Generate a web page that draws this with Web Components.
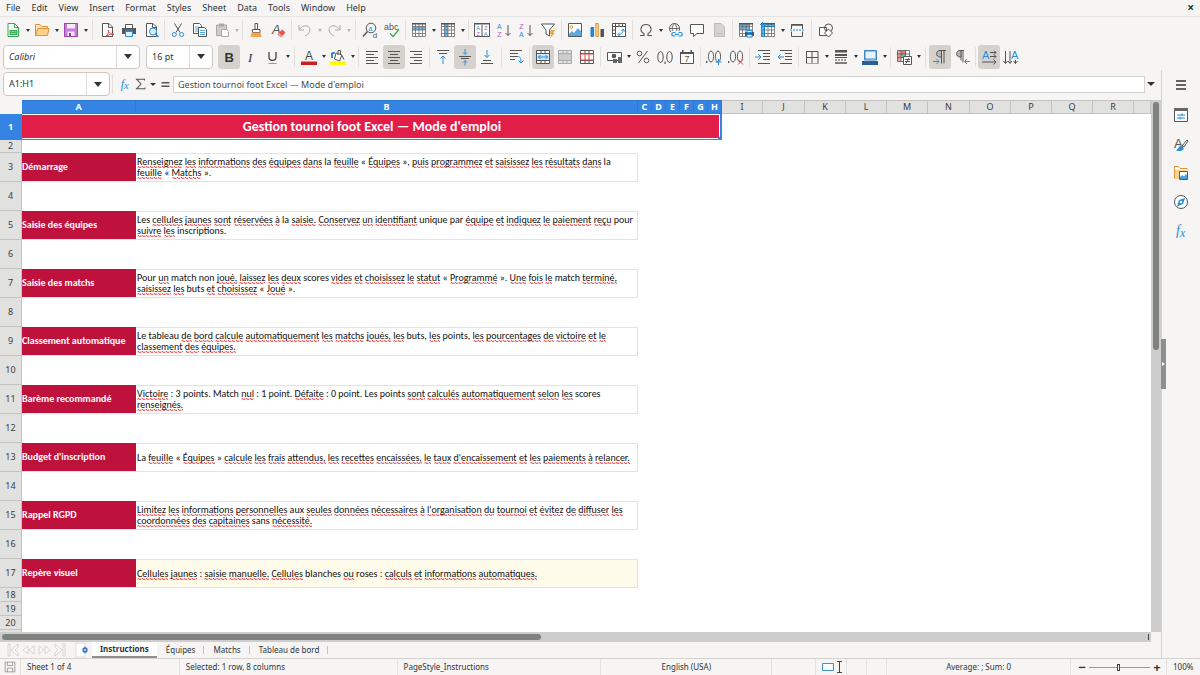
<!DOCTYPE html>
<html lang="fr">
<head>
<meta charset="utf-8">
<title>Gestion tournoi foot Excel</title>
<style>
html, body { margin: 0; height: 100%; }
body { font: 9px/12px "Noto Sans", "Open Sans", sans-serif; color: #2e3436; background: #f6f5f4; overflow: hidden;
  --line: #d5d2cf; --edge: #cdc7c2; --down: #d5d1cd; --blue: #3584e4; --sheet-font: Carlito, Lato, sans-serif; }
</style>
</head>
<body>
<calc-app></calc-app>
<script>
const K = '#555', B = '#2a8fd8', O = '#e8953a', P = '#b455c4', R = '#e04848';
const p = (d, s = K, f = 'none', w = 1) => `<path d="${d}" stroke="${s}" fill="${f}" stroke-width="${w}"/>`;
const f = (d, c = K) => `<path d="${d}" fill="${c}"/>`;
const t = (x, y, size, c, s, extra = '') => `<text x="${x}" y="${y}" font-size="${size}" fill="${c}" ${extra}>${s}</text>`;
const page = p('M3.5 1.5H10l3.5 3.5v9.5h-10z', K, '#fff') + p('M9.5 1.5V5.5H13.5');
/* A 4 x 4 table; `tint` colours one band of its cells */
const grid = (tint = '') => f('M1 1h14v14H1z', '#fff') + tint + p('M1.500 1.500h13v13h-13zM1.500 4.500h13M1.500 8h13M1.500 11.500h13M4.500 1.500v13M8 1.500v13M11.500 1.500v13', '#6a6a6a', 'none', .8) + f('M1 1h14v1.500H1z', '#555');
const lines = a => a.map(([x, y, w]) => p(`M${x} ${y}h${w}`, '#555')).join('');

const ICONS = {
  new: p('M3 1.5h6.5l4 4v9H3z', '#35a853', '#fff') + p('M9.5 1.5v4h4', '#35a853') + f('M4.500 8h8v5h-8z', '#35a853') + p('M5.500 9.700h6M5.500 11.500h6', '#d8f0de', 'none', .6),
  open: p('M1.500 14V2.500h4.500l1.500 2h6V6', '#e0913c', '#fbe3b4') + p('M1.500 13.500L4 6.500h11l-1.500 7z', '#e0913c', '#fad28a'),
  save: f('M1 1h14v14H1z', '#c37fd4') + f('M4 1.500h8v5H4z', '#f6e8fa') + f('M4.500 9.500h7V15h-7z', '#f6e8fa') + f('M6 11h2v4H6z', '#8d3ba5') + p('M1.500 1.500h13v13h-13z', '#9a45b0'),
  pdf: page + p('M7 14.500c2-2 3-5 2.500-6.500-1.500 1 3 5 5.500 4.500-2-1.500-6 .5-8 2z', R),
  print: p('M4.500 6V2.500h7V6', K, '#fff') + f('M1 6h14v6H1z', '#555') + p('M4 8h8', '#2a8fd8') + p('M4.500 9.500h7v5h-7z', B, '#dff0fb'),
  preview: page + `<circle cx="10" cy="9.500" r="3.500" fill="#d9eefb" stroke="${B}"/>` + p('M12.500 12l3 3', B, 'none', 1.5),
  cut: p('M4.500 1.500l5.500 9M11.500 1.500L6 10.500') + `<circle cx="4.300" cy="12.500" r="2" fill="none" stroke="${B}"/><circle cx="11.700" cy="12.500" r="2" fill="none" stroke="${B}"/>`,
  copy: p('M1.500 1.500h6l2 2v8h-8z', K, '#fff') + p('M3 5h4M3 7h4M3 9h4', B, 'none', .8) + p('M6.500 5.500h6l2 2v7h-8z', K, '#fff') + p('M8 8.500h5M8 10.500h5M8 12.500h5', B, 'none', .8),
  paste: p('M2.500 3v10.500h10V3z', '#aaa', '#ccc') + f('M5 1.500h5v3H5z', '#aaa') + p('M7.500 7.500h5l2 2v5h-7z', '#aaa', '#fff'),
  clone: p('M7 1.500h2.500v6H7zM4.500 7.500h7.500v3H4.500z', K, '#fff') + f('M3.500 10.500h9L13.500 15h-11z', '#f0a64a'),
  clear: t(2, 12, 13, K, 'A', 'font-style="italic"') + f('M7.500 12.500l4.500-5 3.500 3-4.500 5z', '#e25555') + f('M7.500 12.500l1.500-1.600 3.500 3-1.500 1.600z', '#f29a9a'),
  undo: p('M2 3v5h5M2.500 7.500C6 2 13 3 13 8c0 3-3 5-5 6', '#aaa'),
  redo: p('M14 3v5H9M13.500 7.500C10 2 3 3 3 8c0 3 3 5 5 6', '#aaa'),
  find: `<circle cx="9" cy="6" r="4.800" fill="none" stroke="${K}"/>` + p('M5.500 9.500L1 14.500', K, 'none', 1.5) + t(6.500, 8.500, 7, B, 'a') + t(10.800, 15.500, 8, K, 'd'),
  spell: t(0, 8, 9, K, 'abc') + p('M6 11.500l3 3 6-7', '#3aa757', 'none', 1.300),
  row: grid(f('M1 4.500h14V8H1z', '#63b4ec')),
  col: grid(f('M4.500 2H8v12.500H4.500z', '#63b4ec')),
  sort: p('M.5 1.500h15v13H.5zM8 3v12', K, '#fff') + f('M0 1h16v1.500H0z') + t(2.300, 8, 5.500, B, 'A') + t(2.500, 14, 5.500, P, 'Z') + t(10.200, 8, 5.500, P, 'Z') + t(10, 14, 5.500, B, 'A'),
  asc: t(1, 7, 7, B, 'A') + t(1.300, 15, 7, P, 'Z') + p('M12 3v10.500M9.500 11l2.500 2.500 2.500-2.500'),
  desc: t(1.300, 7, 7, P, 'Z') + t(1, 15, 7, B, 'A') + p('M12 3v10.500M9.500 11l2.500 2.500 2.500-2.500'),
  filter: p('M1.500 2h13L9.500 8v6L6 12V8z', K, '#fff') + f('M11 8h4l-2 3h2l-5 5 1.500-4H10z', '#f0a040'),
  image: p('M1.500 1.500h13v13h-13z', K, '#fff') + f('M2 14V12l3-3 2 2 4-5 3.500 4v4z', '#5aa9e0') + `<circle cx="4.500" cy="5" r="1.300" fill="none" stroke="${O}"/>`,
  chart: p('M2 5.500h2.500v9H2z', '#1f7ac2', '#2a8fd8') + p('M6.800 1.500h2.500v13H6.800z', '#e0913c', '#fbd59b') + f('M11.500 7H15v8h-3.500z', '#555'),
  pivot: p('M1.500 1.500h13v13h-13z', K, '#fff') + p('M1.500 4.500h13M4.500 1.500v13M8 1.500v3M11.500 1.500v3M1.500 8h3M1.500 11.500h3') + p('M7.500 12.500c3 0 4-1 4.500-4.500M10.500 9L12.200 7l1.500 2.500M9 10.500l-2 2 2 2', B),
  omega: p('M2 13.500h4v-2C1 9 2.500 2.500 8 2.500s7 6.500 2 9v2h4', K, 'none', 1.100),
  link: `<circle cx="7.500" cy="6.500" r="5" fill="none" stroke="${K}"/>` + p('M2.500 6.500h10M7.500 1.500c-3 3-3 7 0 10M7.500 1.500c3 3 3 7 0 10', K, 'none', .8) + `<path d="M4 9h12v6H4z" fill="#f6f5f4"/>` + p('M8.500 10.500H6.500a1.500 1.500 0 0 0 0 3.500h2M11.500 10.500h2a1.500 1.500 0 0 1 0 3.500h-2M8 12.300h4', B, 'none', 1.200),
  comment: p('M1.500 2.500h13v9H8L4.500 14.500v-3h-3z', K, '#fff'),
  hf: p('M3.500 1.500H10l3.500 3.500v9.500h-10z', '#bbb', '#d4d4d4') + p('M5.500 11.500h6', '#bbb'),
  area: grid(f('M1 2h10.500v6H1z', '#63b4ec')) + f('M7 10h9v4H7z', '#555') + p('M9 8.500h5v2H9zM9 12.500h5v2.500H9z', B, '#fff'),
  freeze: grid(f('M1 2h14v2.500H1zM1 2h3.500v13H1z', '#63b4ec')) + p('M4.500 2v13M2 4.500h13', '#1f7ac2') + p('M2.500 0v5M0 2.500h5', B),
  split: p('M2.500 7V2.500h11V7M2.500 9.500v5h11v-5') + p('M2 3h12', K, 'none', 1.500) + p('M1 8h14', B).replace('/>', ' stroke-dasharray="2 1"/>'),
  shapes: p('M1.500 5.500h7v8h-7z', K, '#fff') + `<circle cx="10.500" cy="6" r="4" fill="none" stroke="${K}"/>` + p('M10.500 7l4 4-4 4-4-4z', K, '#fff'),
  bold: t(3.500, 13, 13, '#333', 'B', 'font-weight="700"'),
  italic: t(5, 13, 13, '#333', 'I', 'font-style="italic" font-family="Liberation Serif"'),
  underline: p('M4 3v5c0 4.500 7 4.500 7 0V3', '#444', 'none', 1.300) + p('M3.500 14.500h8', '#5aa9e0'),
  fontcolor: t(4, 11, 12, '#444', 'A') + f('M0 12.500h16V16H0z', '#c9211e'),
  bucket: f('M0 12.500h16V16H0z', '#ffff00') + p('M6 4l6 2-2.500 6-5-2z', K, '#fff') + p('M8 6V1.500h2.500V6M12 6.500l2 4', K) + p('M2 9V4.500l3-1', '#1f7ac2', 'none', 1.800),
  left: lines([[2, 2.5, 12], [2, 5.5, 8], [2, 8.5, 12], [2, 11.5, 8], [2, 14.5, 12]]),
  center: lines([[2, 2.5, 12], [4, 5.5, 8], [2, 8.5, 12], [4, 11.5, 8], [2, 14.5, 12]]),
  right: lines([[2, 2.5, 12], [6, 5.5, 8], [2, 8.5, 12], [6, 11.5, 8], [2, 14.5, 12]]),
  top: lines([[2, 1.5, 12], [4, 4.5, 8]]) + p('M8 15V7M5.500 9.500L8 7l2.500 2.500', B),
  middle: lines([[2, 7.5, 12], [4, 9.5, 8]]) + p('M8 0v5M6 3.500l2 2 2-2M8 16.500v-5M6 13.500l2-2 2 2', B),
  bottom: lines([[4, 11.5, 8], [2, 14.5, 12]]) + p('M8 1v7M5.500 6L8 8.500 10.500 6', B),
  wrap: lines([[2, 1.5, 12], [2, 4.5, 8], [2, 7.5, 7], [2, 10.5, 5]]) + p('M9 7.500c3 0 4 1 4 6M10.500 11.500l2.500 2.500 2.500-2.500', B),
  merge: p('M1.500 1.500h13v13h-13z', K, '#fff') + p('M1.500 4.500h13M1.500 11.500h13M6 1.500v3M10 1.500v3M6 11.500v3M10 11.500v3') + f('M2 5h12v6H2z', '#cfe8fa') + p('M3 8h10M5.500 6l-2 2 2 2M10.500 6l2 2-2 2', B),
  mergec: p('M1.500 1.500h13v13h-13z', '#aaa', '#e4e4e4') + p('M1.500 4.500h13M1.500 11.500h13M6 1.500v3M10 1.500v3M6 11.500v3M10 11.500v3', '#aaa') + f('M2 5h12v6H2z', '#ccc'),
  unmerge: p('M1.500 1.500h13v13h-13z', K, '#fff') + p('M1.500 4.500h13M1.500 11.500h13M6 1.500v3M10 1.500v3M6 11.500v3M10 11.500v3') + p('M1.500 5h13v6h-13zM6 5v6M10 5v6', R, '#fff'),
  money: p('M1.500 3.500h14v8h-14z', K, '#fff') + `<circle cx="8" cy="7" r="2.300" fill="#555"/>` + f('M7 10h4v4H7zM12 8h4v6h-4z', '#666'),
  percent: `<circle cx="4.500" cy="4.500" r="2.300" fill="none" stroke="${K}"/><circle cx="11.500" cy="11.500" r="2.300" fill="none" stroke="${K}"/>` + p('M12.500 2L3.500 14'),
  number: `<ellipse cx="3.500" cy="8" rx="2.700" ry="5.500" fill="none" stroke="${K}"/><ellipse cx="12.500" cy="8" rx="2.700" ry="5.500" fill="none" stroke="${K}"/>` + f('M7.500 12.500h1.200V15H7.500z'),
  date: p('M1.500 3.500h13v11h-13z', K, '#fff') + f('M1 3h14v2H1zM3 1h1.500v3H3zM11.500 1H13v3h-1.500z') + t(5.500, 13, 9, K, '7'),
  adddec: f('M0 12h1.300v2H0z') + `<ellipse cx="5" cy="7.500" rx="2.600" ry="5.500" fill="none" stroke="${K}"/><ellipse cx="12" cy="7.500" rx="2.600" ry="5.500" fill="none" stroke="${K}"/>` + p('M12.500 10v6M9.500 13h6', B),
  deldec: f('M0 12h1.300v2H0z') + `<ellipse cx="5" cy="7.500" rx="2.600" ry="5.500" fill="none" stroke="${K}"/><ellipse cx="12" cy="7.500" rx="2.600" ry="5.500" fill="none" stroke="${K}"/>` + p('M10 10.500l5 5M15 10.500l-5 5', R),
  indent: lines([[3, 1.5, 12], [8, 4.5, 7], [8, 7.5, 7], [8, 10.5, 7], [3, 14.5, 12]]) + p('M0 8h6M3.500 5.500L6 8l-2.500 2.500', B),
  outdent: lines([[3, 1.5, 12], [8, 4.5, 7], [8, 7.5, 7], [8, 10.5, 7], [3, 14.5, 12]]) + p('M7 8H1M3.500 5.500L1 8l2.500 2.500', B),
  borders: p('M2 2.500h12v12M8 2.500v12M2 8.500h12', K) + p('M2.500 2v12.500') + p('M2 14.500h12.500', O),
  style: f('M2 1h12v2.500H2zM2 5h12v2H2z') + p('M2 8.500h12') + p('M2 11h12').replace('/>', ' stroke-dasharray="2 1"/>') + p('M2 14h12', K, 'none', 1.500),
  bcolor: f('M0 12h16v4H0z', '#2a6099') + p('M3 2h11v8H3z', '#5a8fbf', '#e4f2fc') + p('M2.500 1.500v9.500h12v-9.500z', '#3f87c4'),
  cond: f('M1 1h13v12H1z', '#fff') + f('M1 1.500h4v11H1z', '#f2a0a0') + f('M5 1.500h5v3.500H5z', '#e77') + f('M5 5h5v3.500H5z', '#7cc87c') + p('M1.500 1.500h12v11h-12zM1.500 5h12M1.500 8.500h12M5 1.500v11M9.500 1.500v11', K, 'none', .8) + p('M7.500 7.500h8v8h-8z', K, '#fff') + p('M9 10.500h5M9 12.500h5M13 9l-3 5.500'),
  ltr: f('M8 1.500h2V8H8C3.500 8 3.500 1.500 8 1.500z', '#b8b5b2') + p('M14 1.500H8C3.500 1.500 3.500 8 8 8h1M9.500 1.500v13M12 1.500v13') + p('M1 12.500h6M4.500 10l2.500 2.500L4.500 15', B),
  rtl: f('M8 1.500h0V8H6C1.500 8 1.500 1.500 6 1.500z', '#b8b5b2') + p('M10 1.500H6C1.500 1.500 1.500 8 6 8h1M7 1.500v10M9 1.500v12') + p('M16 12.500h-5M13 10l-2.500 2.500L13 15', B),
  horiz: t(1, 10, 11, B, 'A') + p('M9 3.500h6M9 7.500h6M1 13h14M13 1.500l2 2-2 2M13 5.500l2 2-2 2M12.500 10.500L15 13l-2.500 2.500'),
  vert: t(8, 10, 11, B, 'A') + p('M2.500 2v12M7 2v12M12.500 11v4M.5 12l2 2.500 2-2.500M5 12l2 2.500L9 12M10.500 12l2 2.500 2-2.500'),
  fx: t(3, 12, 14, B, '<tspan>f</tspan><tspan dy="2" font-size="12">x</tspan>', 'font-style="italic" font-family="Liberation Serif"'),
  sigma: p('M12 4V2.500H3L8 8l-5 5.500h9.500V12', K, 'none', 1.200),
  equals: p('M4 6.500h9M4 10.500h9', K, 'none', 1.600),
  menu: p('M3 4h10M3 8h10M3 12h10', '#333', 'none', 1.400),
  props: p('M1.500 1.500h13v13h-13z', K, '#fff') + f('M1 1h14v3H1z', '#666') + p('M4 8h8M4 11h8M9 6.500v2.500M7 9.500v3', B),
  styles: t(1, 12, 13, K, 'A') + p('M9 10l5-6 1 1-4 6z', K, '#fff') + f('M3 14.500c2-1 2-4 5-4.500l3 2.500c-2 3-5 3-8 2z', B),
  gallery: p('M1.500 13.500v-12h4l1.500 2h7V5', '#e0913c', '#fff') + f('M2 5h11v9H2z', '#fad28a') + p('M6.500 6.500h8v8h-8z', K, '#fff') + f('M7 14v-2l2.500-2 1.500 1.500L13 9l1 1.500V14z', '#4c9fdc'),
  navigator: `<circle cx="8" cy="8" r="6.500" fill="#fff" stroke="${K}"/>` + f('M12 4l-2 6-6 2.500 2-6.500z', B) + `<circle cx="8" cy="8" r="1.200" fill="#fff"/>`,
  addsheet: p('M2 1h9v14H2z', '#ddd', '#fff') + `<circle cx="11" cy="8" r="2" fill="#fff" stroke="#2a6fb8" stroke-width="1.300"/>` + p('M11 4.500v7', '#2a6fb8', 'none', .8),
  disk: p('M1.500 1.500h13v13h-13zM4.500 1.500v4.500h7v-4.500M4.500 14.500v-5h7v5', '#888'),
  first: p('M2 2h2v12H2zM12 2L5 8l7 6V11L9 8l3-3z', '#ccc', '#fbfaf9', .8),
  prev: p('M7 4L2 8l5 4zM13 4L8 8l5 4z', '#ccc', '#fbfaf9', .8),
  next: p('M3 4l5 4-5 4zM9 4l5 4-5 4z', '#ccc', '#fbfaf9', .8),
  last: p('M12 2h2v12h-2zM4 2l7 6-7 6V11l3-3-3-3z', '#ccc', '#fbfaf9', .8),
  selmode: p('M2.500 4.500h11v7h-11z', '#3b93c9', '#fff'),
  ibeam: p('M5 2.500h5M7.500 2.500v11M5 13.500h5', '#444')
};
const svg = n => `<svg viewBox="0 0 16 16" aria-hidden="true">${ICONS[n]}</svg>`;
const RESET = `
*{box-sizing:border-box}
button,input{font:inherit;color:inherit;border:0;padding:0;margin:0;background:none;outline:0}
svg{display:block;width:16px;height:16px;flex:none;overflow:visible}
svg text{font-family:"Liberation Sans",sans-serif}
svg text[font-family]{font-family:"Liberation Serif",serif}
.arrow{display:grid;place-items:center;flex:none}
.arrow::before{content:"";border:3px solid transparent;border-top:4px solid #2e3436;border-bottom:0}`;

function define(name, css, html) {
  customElements.define(name, class extends HTMLElement {
    connectedCallback() {
      if (this.shadowRoot) return;
      this.attachShadow({ mode: 'open' }).innerHTML =
        `<style>${RESET}${css}</style>${typeof html === 'function' ? html(this) : html}`;
    }
  });
}

define('menu-bar', `
:host{display:flex;align-items:center;height:17px;padding:0 6px 0 0;border-bottom:1px solid #e6e4e2}
nav{display:flex;flex:1}
nav button{padding:0 5px 0 6px}
.close{font-weight:700;font-size:12px}`,
  `<nav>${['File', 'Edit', 'View', 'Insert', 'Format', 'Styles', 'Sheet', 'Data', 'Tools', 'Window', 'Help']
    .map(m => `<button>${m}</button>`).join('')}</nav><button class="close" aria-label="Close">×</button>`);

define('tool-bar', `
:host{display:flex;align-items:center;height:27px;padding:0 2px}
:host([slim]){height:26px}`, '<slot></slot>');

define('tool-gap', `
:host{display:grid;place-items:center;width:5px;height:22px;flex:none}
:host([wide]){width:7px}
i{width:1px;height:20px;background:#e2dfdc}`, '<i></i>');

define('tool-button', `
:host{display:flex;flex:none}
.main{width:22px;height:24px;display:grid;place-items:center;border-radius:3px}
:host([pressed]) .main{background:var(--down)}
.arrow{width:7px}
.arrow::before{border-width:3px 2px 0 2px}
:host([off]) .arrow{opacity:.35}`,
  e => {
    const l = e.getAttribute('label');
    return `<button class="main" aria-label="${l}" title="${l}">${svg(e.getAttribute('icon'))}</button>` +
      (e.hasAttribute('drop') ? `<button class="arrow" aria-label="${l} options"></button>` : '');
  });

define('combo-field', `
:host{display:flex;flex:none;height:24px;background:#fff;border:1px solid var(--edge);border-radius:4px;overflow:hidden}
input{flex:1;min-width:0;padding:0 5px}
:host([slanted]) input{font-style:italic}
.arrow{width:23px;border-left:1px solid #dedad7}
.arrow::before{border-width:5px 4px 0 4px}`,
  e => `<input aria-label="${e.getAttribute('label')}" value="${e.getAttribute('value')}">
<button class="arrow" aria-label="${e.getAttribute('label')} list"></button>`);

define('formula-bar', `
:host{display:flex;align-items:center;height:28px;padding:0 4px 0 3px}
combo-field{width:107px}
.line{flex:1;min-width:0;height:17px;background:#fff;border:1px solid var(--line);padding:0 4px;color:#4a4a4a}
.cell{width:16px;display:grid;place-items:center}
.cell svg{width:14px;height:14px}
tool-gap{margin-right:2px}
.arrow{width:8px}
.wide{width:12px}
.arrow::before{border-width:3px 3px 0 3px}
.wide::before{border-width:4px 4px 0 4px}`,
  `<combo-field label="Name box" value="A1:H1"></combo-field><tool-gap></tool-gap>
<button class="cell" aria-label="Function wizard">${svg('fx')}</button>
<button class="cell" aria-label="Sum">${svg('sigma')}</button><button class="arrow" aria-label="Sum options"></button>
<button class="cell" aria-label="Formula">${svg('equals')}</button>
<input class="line" aria-label="Formula input" value="Gestion tournoi foot Excel — Mode d'emploi">
<button class="arrow wide" aria-label="Expand formula bar"></button>`);

/* Words found in the active dictionary; every other word gets the spelling squiggle. */
const KNOWN = new Set('la le les pour unique par inscriptions match non scores buts points tableau point aux sans blanches roses'.split(' '));
const CAP_ONLY = new Set(['le', 'les']);
const spell = s => s.replace(/[\p{L}'’]+[.,]?/gu, w => {
  const bare = w.replace(/[.,]/, ''), low = bare.toLowerCase();
  const ok = KNOWN.has(low) && !(CAP_ONLY.has(low) && bare === low);
  return ok ? w : `<u>${w}</u>`;
});
define('spell-text', `
:host{display:block}
u{text-decoration:none;background:url("data:image/svg+xml,%3Csvg xmlns='http://www.w3.org/2000/svg' width='4' height='2'%3E%3Cpath d='M0 1.500L1 .5L3 1.500L4 1' fill='none' stroke='%23e02020' stroke-width='.9'/%3E%3C/svg%3E") repeat-x 0 100%}`,
  e => e.getAttribute('text').split('|').map(spell).join('<br>'));

const ROWS = {
  3: ['Démarrage', 'Renseignez les informations des équipes dans la feuille « Équipes », puis programmez et saisissez les résultats dans la|feuille « Matchs ».'],
  5: ['Saisie des équipes', 'Les cellules jaunes sont réservées à la saisie. Conservez un identifiant unique par équipe et indiquez le paiement reçu pour|suivre les inscriptions.'],
  7: ['Saisie des matchs', 'Pour un match non joué, laissez les deux scores vides et choisissez le statut « Programmé ». Une fois le match terminé,|saisissez les buts et choisissez « Joué ».'],
  9: ['Classement automatique', 'Le tableau de bord calcule automatiquement les matchs joués, les buts, les points, les pourcentages de victoire et le|classement des équipes.'],
  11: ['Barème recommandé', 'Victoire : 3 points. Match nul : 1 point. Défaite : 0 point. Les points sont calculés automatiquement selon les scores|renseignés.'],
  13: ["Budget d'inscription", "La feuille « Équipes » calcule les frais attendus, les recettes encaissées, le taux d'encaissement et les paiements à relancer."],
  15: ['Rappel RGPD', "Limitez les informations personnelles aux seules données nécessaires à l'organisation du tournoi et évitez de diffuser les|coordonnées des capitaines sans nécessité."],
  17: ['Repère visuel', 'Cellules jaunes : saisie manuelle. Cellules blanches ou roses : calculs et informations automatiques.']
};
const COLS = [['A', 114], ['B', 502], ['C', 14], ['D', 14], ['E', 14], ['F', 14], ['G', 14], ['H', 14],
  ['I', 41], ['J', 42], ['K', 41], ['L', 41], ['M', 41], ['N', 42], ['O', 41], ['P', 41], ['Q', 41], ['R', 41]];
const rowHtml = n => {
  const size = n === 1 ? 'title' : n === 2 ? 'thin' : n > 17 ? 'short' : '';
  let cells = '<td colspan="19"></td>';
  if (n === 1) cells = `<td colspan="8" class="merged">Gestion tournoi foot Excel — Mode d'emploi</td><td colspan="11"></td>`;
  if (ROWS[n]) cells = `<td class="name">${ROWS[n][0]}</td><td class="text${n === 17 ? ' hint' : ''}"><spell-text text="${ROWS[n][1]}"></spell-text></td><td colspan="17"></td>`;
  return `<tr class="${size}"><th scope="row">${n > 20 ? '' : n}</th>${cells}</tr>`;
};
define('sheet-grid', `
:host{display:block;overflow:hidden;background:#fff;min-width:0}
table{border-collapse:separate;border-spacing:0;table-layout:fixed;width:100%;font-family:var(--sheet-font)}
th,td{padding:0;overflow:hidden}
th{font:9px/12px "Noto Sans",sans-serif;background:#e1e1df;border:0 solid #c2c2c0;border-width:0 1px 1px 0;color:#3c3c3c}
thead th{height:14px;border-top:1px solid #c2c2c0}
thead .on{background:var(--blue);color:#fff;font-weight:700;border-color:#3079d0}
thead .corner{background:#f6f5f4;border-color:#f6f5f4}
tbody tr{height:29px}
tbody tr.short{height:14px}
tbody tr.thin{height:13px}
tbody tr.title{height:26px}
.title th{background:var(--blue);color:#fff;font-weight:700;border-color:var(--blue)}
.merged{background:#e11d48;color:#fff;font-size:14px;line-height:16px;font-weight:700;text-align:center;position:relative;
  box-shadow:inset -2px -1px var(--blue),inset -3px -2px #fff,inset 0 1px #fff}
.merged::after{content:"";position:absolute;right:0;bottom:0;width:4px;height:3px;background:var(--blue)}
.name{background:#be123c;color:#fff;font-size:10px;line-height:12px;font-weight:700;padding:0 1px 1px 0;border-bottom:1px solid #e5e7eb}
.text{color:#111;font-size:10px;line-height:11px;padding:0 1px 1px;border:1px solid #dfe2e6;border-left:0;white-space:nowrap}
.hint{background:#fffbeb}`,
  `<table><colgroup><col style="width:22px">${COLS.map(c => `<col style="width:${c[1]}px">`).join('')}<col></colgroup>
<thead><tr><th class="corner"></th>${COLS.map((c, i) => `<th scope="col"${i < 8 ? ' class="on"' : ''}>${c[0]}</th>`).join('')}<th></th></tr></thead>
<tbody>${Array.from({ length: 21 }, (_, i) => rowHtml(i + 1)).join('')}</tbody></table>`);

define('scroll-track', `
:host{display:flex;justify-content:space-between;background:#cdcdcd;padding:1px 2px}
:host([vertical]){padding:2px}
i{display:block;background:#7f817f;border-radius:3px}
:host([vertical]) i{width:6px;height:47%}
:host(:not([vertical])) i{width:47%;margin:1px 0}
b{width:1px;margin:1px 0;background:#444}
:host([vertical]) b{display:none}`, '<i></i><b></b>');

define('sheet-tabs', `
:host{display:flex;align-items:center;height:16px;padding-left:6px;font-size:8px}
.nav{width:15px;height:16px}
.add{width:20px;height:16px;margin-left:6px;display:grid;place-items:center}
.tab{height:16px;padding:0 9px;position:relative}
.tab+.tab::after{content:"";position:absolute;right:0;top:4px;height:8px;width:1px;background:#c6c2be}
.active{background:#fff;font-weight:700;border-bottom:2px solid #8e8e8c;padding:0 8px}`,
  `${[['first', 'First sheet'], ['prev', 'Previous sheet'], ['next', 'Next sheet'], ['last', 'Last sheet']]
    .map(n => `<button class="nav" aria-label="${n[1]}">${svg(n[0])}</button>`).join('')}
<button class="add" aria-label="Add sheet">${svg('addsheet')}</button>
<button class="tab active">Instructions</button><button class="tab">Équipes</button><button class="tab">Matchs</button><button class="tab">Tableau de bord</button>`);

define('side-deck', `
:host{display:flex;width:39px;border-left:1px solid var(--line);position:relative}
nav{flex:1;display:flex;flex-direction:column;align-items:center;gap:5px;padding-top:3px}
button{width:24px;height:24px;display:grid;place-items:center}
nav button:first-child{margin-bottom:1px}
.grip{position:absolute;left:-1px;top:50%;width:5px;height:50px;margin-top:-25px;background:#8f8f8f}
.grip::after{content:"";border:2px solid transparent;border-left:3px solid #fff;border-right:0}`,
  `<nav>${[['menu', 'Sidebar settings'], ['props', 'Properties'], ['styles', 'Styles'], ['gallery', 'Gallery'], ['navigator', 'Navigator'], ['fx', 'Functions']]
    .map(n => `<button aria-label="${n[1]}">${svg(n[0])}</button>`).join('')}</nav>
<button class="grip" aria-label="Hide sidebar"></button>`);

define('status-bar', `
:host{display:grid;grid-template-columns:21px 159fr 218fr 204fr 171fr 44fr 31px 20px 20px 184fr 96px 33px;height:17px;border-top:1px solid var(--line);font-size:8px}
div{display:flex;align-items:center;padding:0 6px;white-space:nowrap;min-width:0;border-right:1px solid #e4e1de}
.mid{justify-content:center}
.tight{padding:0 4px}
div:last-child{border:0;padding:0 6px}
.small svg{width:12px;height:12px}
.modes{padding:0 0 0 4px}
.modes svg{margin-right:-4px}
.zoom{gap:2px;padding:0 4px 0 6px;font-weight:700}
.zoom button{font-size:13px;line-height:12px;width:10px}
input{flex:1;min-width:0;height:12px;appearance:none;background:linear-gradient(#999,#999) center/100% 1px no-repeat}
input::-webkit-slider-thumb{appearance:none;width:3px;height:7px;background:#fff;border:1px solid #444}`,
  `<div class="small tight">${svg('disk')}</div><div>Sheet 1 of 4</div><div>Selected: 1 row, 8 columns</div><div>PageStyle_Instructions</div>
<div class="mid">English (USA)</div><div></div><div class="modes">${svg('selmode')}${svg('ibeam')}</div><div></div><div></div>
<div class="mid">Average: ; Sum: 0</div>
<div class="zoom"><button aria-label="Zoom out">−</button><input type="range" min="0" max="100" value="48" aria-label="Zoom"><button aria-label="Zoom in">+</button></div>
<div>100%</div>`);

/* Toolbar spec: "icon" | "icon+" has a drop-down | "icon*" is pressed | "icon!" is disabled | "-" separator | "=" wide separator */
const bar = s => s.trim().split(/\s+/).map(k => {
  if (k === '-') return '<tool-gap></tool-gap>';
  if (k === '=') return '<tool-gap wide></tool-gap>';
  const n = k.replace(/[+*!]/g, '');
  return `<tool-button icon="${n}" label="${n}"${k.includes('+') ? ' drop' : ''}${k.includes('*') ? ' pressed' : ''}${k.includes('!') ? ' off' : ''}></tool-button>`;
}).join('');

define('calc-app', `
:host{display:flex;flex-direction:column;height:100vh}
.body{flex:1;min-height:0;display:flex}
.work{flex:1;min-width:0;display:flex;flex-direction:column}
.view{flex:1;min-height:0;display:grid;grid-template-columns:1fr 10px;grid-template-rows:1fr 10px;margin-top:2px}
.font{width:137px;margin:0 6px 0 1px}
.size{width:67px;margin-right:5px}`,
  `<menu-bar></menu-bar>
<tool-bar slim>${bar('new+ open+ save+ = pdf print preview - cut copy paste+! - clone clear - undo+! redo+! = find spell - row+ col+ - sort asc desc filter - image chart pivot - omega+ link comment hf - area freeze+ split = shapes')}</tool-bar>
<tool-bar><combo-field class="font" slanted label="Font name" value="Calibri"></combo-field><combo-field class="size" label="Font size" value="16 pt"></combo-field>
${bar('bold* italic underline+ = fontcolor+ bucket+ - left center* right - top middle* bottom = wrap - merge* mergec unmerge - money+ percent number date - adddec deldec - indent outdent - borders+ style+ bcolor+ - cond+ = ltr* rtl - horiz* vert')}</tool-bar>
<div class="body"><div class="work"><formula-bar></formula-bar>
<div class="view"><sheet-grid></sheet-grid><scroll-track vertical></scroll-track><scroll-track></scroll-track></div>
<sheet-tabs></sheet-tabs></div><side-deck></side-deck></div>
<status-bar></status-bar>`);
</script>
</body>
</html>
